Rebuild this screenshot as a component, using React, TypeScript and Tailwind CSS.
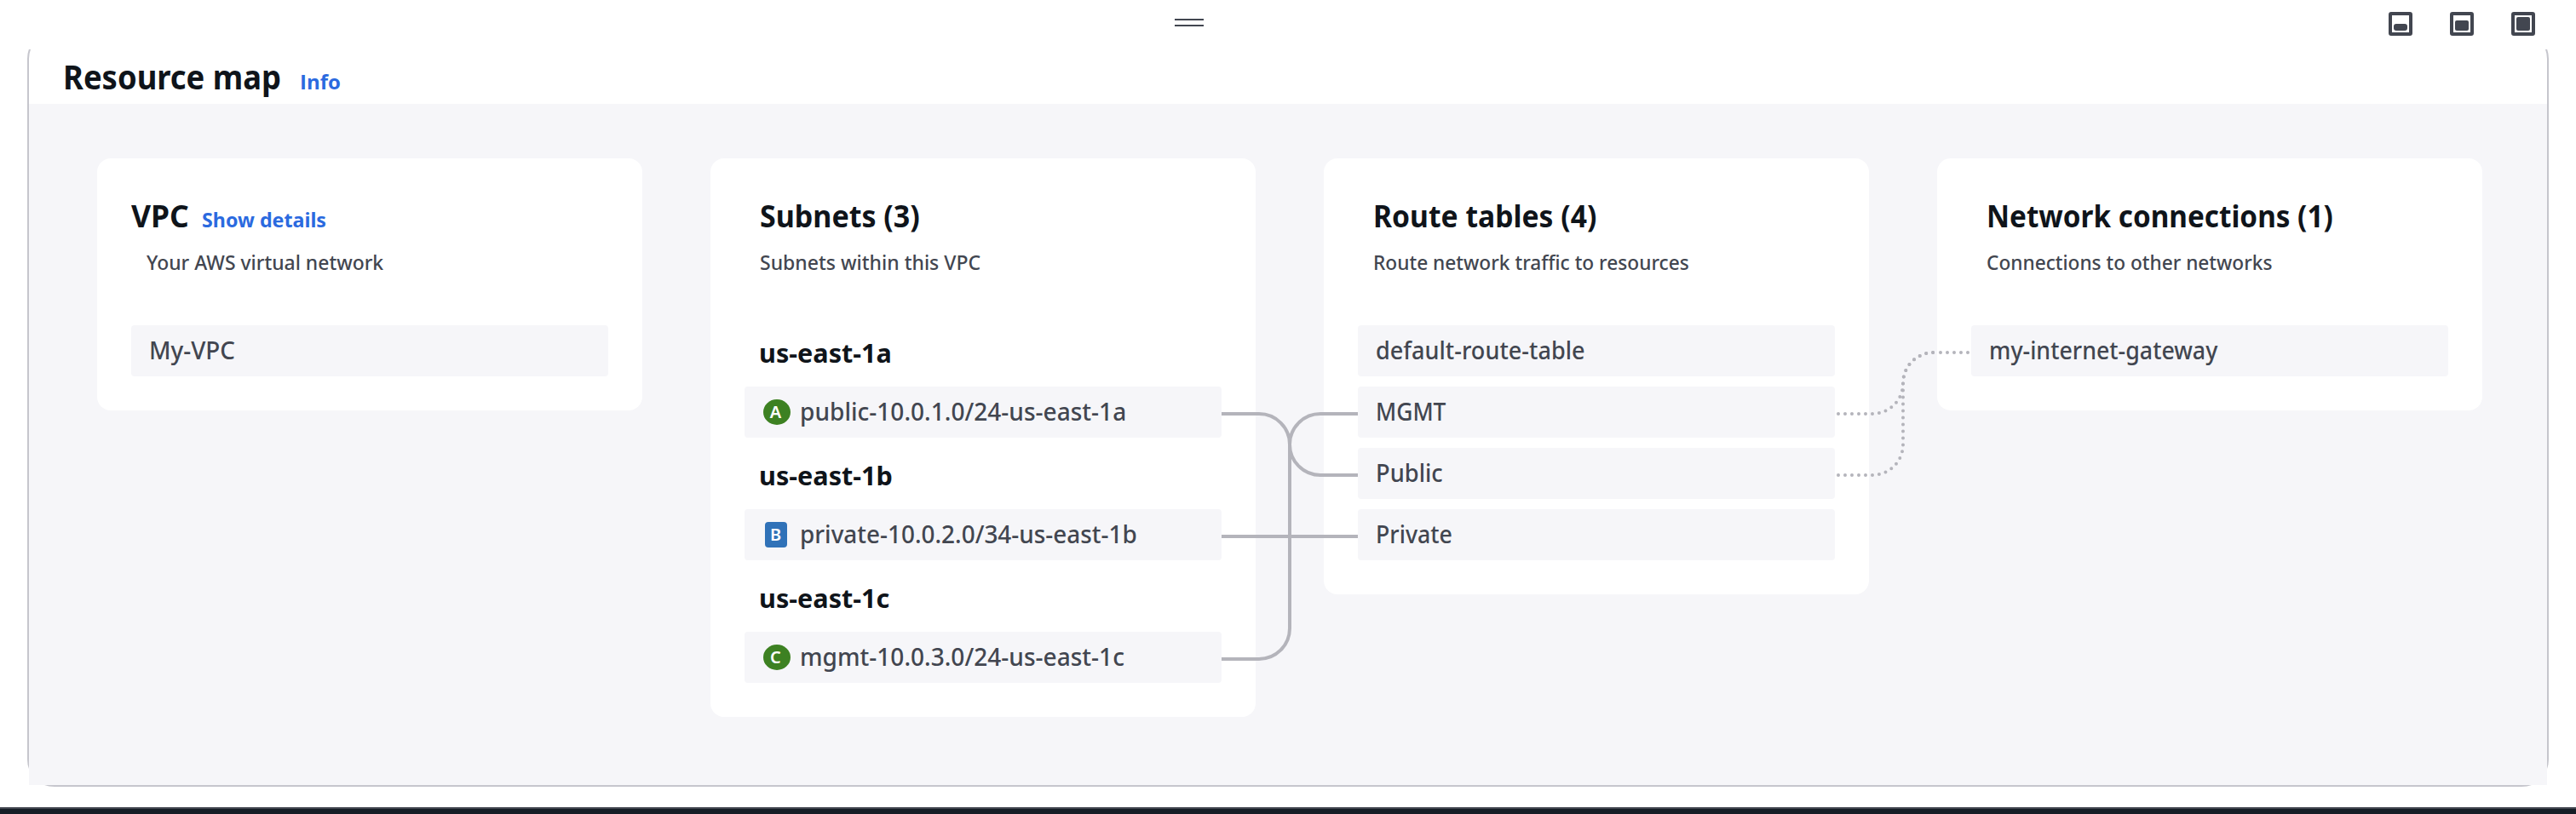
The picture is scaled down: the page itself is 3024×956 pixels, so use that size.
import type { ReactNode } from "react";

const NOTO = "font-['Noto_Sans','Open_Sans',sans-serif]";

function Squeezed({ children, className }: { children: ReactNode; className: string }) {
  return <span className={`inline-block origin-left whitespace-nowrap ${className}`}>{children}</span>;
}

function SizeButton({ label, fill }: { label: string; fill: string }) {
  return (
    <button
      aria-label={label}
      className="flex h-7 w-7 items-end justify-center rounded-[3px] border-4 border-[#424650] pb-0.5"
    >
      <span className={`w-4 bg-[#424650] ${fill}`} />
    </button>
  );
}

function Toolbar() {
  return (
    <div className="grid h-[58px] grid-cols-[1379px_34px_1fr] items-start">
      <span />
      <div className="mt-[22px] flex flex-col gap-[5px]">
        <span className="h-0.5 bg-[#424650]" />
        <span className="h-0.5 bg-[#424650]" />
      </div>
      <div className="flex justify-end gap-11 pt-3.5 pr-12">
        <SizeButton label="Small panel" fill="h-2 rounded-[3px]" />
        <SizeButton label="Medium panel" fill="h-3 rounded-[2px]" />
        <SizeButton label="Full panel" fill="h-4 rounded-[2px]" />
      </div>
    </div>
  );
}

type CardProps = {
  title: string;
  titleClass: string;
  description: string;
  descriptionClass: string;
  link?: ReactNode;
  flush?: boolean;
  children: ReactNode;
};

function Card({ title, titleClass, description, descriptionClass, link, flush, children }: CardProps) {
  return (
    <section className="w-[640px] rounded-2xl bg-white p-10">
      <div className={`flex h-[54px] items-baseline leading-[56px] ${flush ? "" : "pl-[18px]"}`}>
        <h2 className="text-[36px] font-bold text-[#0f141a]">
          <Squeezed className={titleClass}>{title}</Squeezed>
        </h2>
        {link}
      </div>
      <p className="mt-2.5 mb-14 h-9 pl-[18px] text-2xl leading-9 font-medium text-[#424650]">
        <Squeezed className={descriptionClass}>{description}</Squeezed>
      </p>
      <div className="flex flex-col gap-3">{children}</div>
    </section>
  );
}

function Row({ text, textClass, badge }: { text: string; textClass: string; badge?: ReactNode }) {
  return (
    <div className="flex h-[60px] items-center rounded-[4px] bg-[#f6f6f9] pl-5 text-[28px] font-medium text-[#424650]">
      {badge && <span className="w-11">{badge}</span>}
      <span className="pb-0.5 pl-px leading-[58px]">
        <Squeezed className={textClass}>{text}</Squeezed>
      </span>
    </div>
  );
}

function ZoneLabel({ children }: { children: ReactNode }) {
  return (
    <h3 className="-mb-3 h-[72px] pl-[17px] text-[30px] leading-[66px] font-bold text-[#0f141a]">
      <Squeezed className="scale-x-[1.02]">{children}</Squeezed>
    </h3>
  );
}

function PublicBadge({ letter }: { letter: string }) {
  return (
    <span className="ml-0.5 flex h-[30px] w-8 items-center justify-center rounded-[50%] bg-[#3d8122] pr-[3px] text-xl leading-[30px] font-semibold text-white">
      {letter}
    </span>
  );
}

function PrivateBadge({ letter }: { letter: string }) {
  return (
    <span className="ml-1 flex h-[30px] w-[26px] items-center justify-center rounded-[4px] bg-[#3072b8] pr-px text-xl leading-[30px] font-semibold text-white">
      {letter}
    </span>
  );
}

function Connections() {
  return (
    <svg
      viewBox="34 122 2956 800"
      className="pointer-events-none absolute inset-0 h-full w-full"
      fill="none"
      stroke="#b4b4bb"
      strokeWidth="4"
    >
      <path d="M1434 486H1478A36 36 0 0 1 1514 522A36 36 0 0 0 1550 558H1594" />
      <path d="M1434 630H1594" />
      <path d="M1434 774H1478A36 36 0 0 0 1514 738V522A36 36 0 0 1 1550 486H1594" />
      <g strokeLinecap="round" strokeDasharray="0 8" strokeDashoffset="-4">
        <path d="M2154 486H2194" />
        <path d="M2154 558H2194" />
        <path d="M2194 486H2198A36 36 0 0 0 2234 450A36 36 0 0 1 2270 414H2274" />
        <path d="M2194 558H2198A36 36 0 0 0 2234 522V450A36 36 0 0 1 2270 414H2274" />
        <path d="M2274 414H2314" />
      </g>
    </svg>
  );
}

export default function App() {
  return (
    <div className={`flex h-[956px] w-[3024px] flex-col bg-white ${NOTO}`}>
      <Toolbar />
      <main className="h-[890px] overflow-hidden px-8">
        <div className="-mt-[21px] rounded-[32px] border-2 border-[#c6c6cd]">
          <header className="flex h-[83px] items-baseline pt-[19px] pl-10 leading-[64px]">
            <h1 className="w-[278px] text-[40px] font-bold text-[#0f141a]">
              <Squeezed className="scale-x-[0.91]">Resource map</Squeezed>
            </h1>
            <a className="font-['Open_Sans',sans-serif] text-2xl leading-[64px] font-bold text-[#2b6adf]">Info</a>
          </header>
          <div className="relative flex h-[800px] items-start gap-20 bg-[#f6f6f9] pt-16 pl-20">
            <Card
              title="VPC"
              titleClass="w-[83px] scale-x-[0.985]"
              description="Your AWS virtual network"
              descriptionClass="scale-x-[0.955]"
              flush
              link={
                <a className="text-2xl leading-[54px] font-bold text-[#2b6adf]">
                  <Squeezed className="scale-x-[0.968]">Show details</Squeezed>
                </a>
              }
            >
              <Row text="My-VPC" textClass="scale-x-[0.995]" />
            </Card>
            <Card
              title="Subnets (3)"
              titleClass="scale-x-[0.944]"
              description="Subnets within this VPC"
              descriptionClass="scale-x-[0.959]"
            >
              <ZoneLabel>us-east-1a</ZoneLabel>
              <Row
                text="public-10.0.1.0/24-us-east-1a"
                textClass="scale-x-[1.002]"
                badge={<PublicBadge letter="A" />}
              />
              <ZoneLabel>us-east-1b</ZoneLabel>
              <Row
                text="private-10.0.2.0/34-us-east-1b"
                textClass="scale-x-[0.997]"
                badge={<PrivateBadge letter="B" />}
              />
              <ZoneLabel>us-east-1c</ZoneLabel>
              <Row
                text="mgmt-10.0.3.0/24-us-east-1c"
                textClass="scale-x-[1.002]"
                badge={<PublicBadge letter="C" />}
              />
            </Card>
            <Card
              title="Route tables (4)"
              titleClass="scale-x-[0.935]"
              description="Route network traffic to resources"
              descriptionClass="scale-x-[0.946]"
            >
              <Row text="default-route-table" textClass="scale-x-[0.968]" />
              <Row text="MGMT" textClass="scale-x-[0.942]" />
              <Row text="Public" textClass="scale-x-[0.974]" />
              <Row text="Private" textClass="scale-x-[0.956]" />
            </Card>
            <Card
              title="Network connections (1)"
              titleClass="scale-x-[0.924]"
              description="Connections to other networks"
              descriptionClass="scale-x-[0.944]"
            >
              <Row text="my-internet-gateway" textClass="scale-x-[0.957]" />
            </Card>
            <Connections />
          </div>
        </div>
      </main>
      <footer className="h-2 border-t-2 border-[#424650] bg-[#161d26]" />
    </div>
  );
}
